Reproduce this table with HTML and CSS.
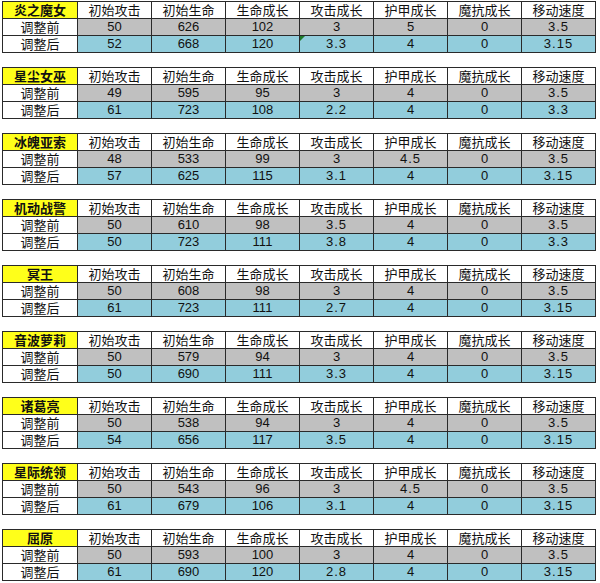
FILE: index.html
```html
<!DOCTYPE html>
<html lang="zh">
<head>
<meta charset="utf-8">
<title>英雄属性调整</title>
<link rel="stylesheet" href="styles.css">
</head>
<body>
<main class="sheet">
  <table class="hero">
    <colgroup><col class="c-label"><col><col><col><col><col><col><col></colgroup>
    <tr class="head"><th class="name">炎之魔女</th><th>初始攻击</th><th>初始生命</th><th>生命成长</th><th>攻击成长</th><th>护甲成长</th><th>魔抗成长</th><th>移动速度</th></tr>
    <tr class="before"><th>调整前</th><td>50</td><td>626</td><td>102</td><td>3</td><td>5</td><td>0</td><td class="dec">3.5</td></tr>
    <tr class="after"><th>调整后</th><td>52</td><td>668</td><td>120</td><td class="dec flag">3.3</td><td>4</td><td>0</td><td class="dec">3.15</td></tr>
  </table>
  <table class="hero">
    <colgroup><col class="c-label"><col><col><col><col><col><col><col></colgroup>
    <tr class="head"><th class="name">星尘女巫</th><th>初始攻击</th><th>初始生命</th><th>生命成长</th><th>攻击成长</th><th>护甲成长</th><th>魔抗成长</th><th>移动速度</th></tr>
    <tr class="before"><th>调整前</th><td>49</td><td>595</td><td>95</td><td>3</td><td>4</td><td>0</td><td class="dec">3.5</td></tr>
    <tr class="after"><th>调整后</th><td>61</td><td>723</td><td>108</td><td class="dec">2.2</td><td>4</td><td>0</td><td class="dec">3.3</td></tr>
  </table>
  <table class="hero">
    <colgroup><col class="c-label"><col><col><col><col><col><col><col></colgroup>
    <tr class="head"><th class="name">冰魄亚索</th><th>初始攻击</th><th>初始生命</th><th>生命成长</th><th>攻击成长</th><th>护甲成长</th><th>魔抗成长</th><th>移动速度</th></tr>
    <tr class="before"><th>调整前</th><td>48</td><td>533</td><td>99</td><td>3</td><td class="dec">4.5</td><td>0</td><td class="dec">3.5</td></tr>
    <tr class="after"><th>调整后</th><td>57</td><td>625</td><td>115</td><td class="dec">3.1</td><td>4</td><td>0</td><td class="dec">3.15</td></tr>
  </table>
  <table class="hero">
    <colgroup><col class="c-label"><col><col><col><col><col><col><col></colgroup>
    <tr class="head"><th class="name">机动战警</th><th>初始攻击</th><th>初始生命</th><th>生命成长</th><th>攻击成长</th><th>护甲成长</th><th>魔抗成长</th><th>移动速度</th></tr>
    <tr class="before"><th>调整前</th><td>50</td><td>610</td><td>98</td><td class="dec">3.5</td><td>4</td><td>0</td><td class="dec">3.5</td></tr>
    <tr class="after"><th>调整后</th><td>50</td><td>723</td><td>111</td><td class="dec">3.8</td><td>4</td><td>0</td><td class="dec">3.3</td></tr>
  </table>
  <table class="hero">
    <colgroup><col class="c-label"><col><col><col><col><col><col><col></colgroup>
    <tr class="head"><th class="name">冥王</th><th>初始攻击</th><th>初始生命</th><th>生命成长</th><th>攻击成长</th><th>护甲成长</th><th>魔抗成长</th><th>移动速度</th></tr>
    <tr class="before"><th>调整前</th><td>50</td><td>608</td><td>98</td><td>3</td><td>4</td><td>0</td><td class="dec">3.5</td></tr>
    <tr class="after"><th>调整后</th><td>61</td><td>723</td><td>111</td><td class="dec">2.7</td><td>4</td><td>0</td><td class="dec">3.15</td></tr>
  </table>
  <table class="hero">
    <colgroup><col class="c-label"><col><col><col><col><col><col><col></colgroup>
    <tr class="head"><th class="name">音波萝莉</th><th>初始攻击</th><th>初始生命</th><th>生命成长</th><th>攻击成长</th><th>护甲成长</th><th>魔抗成长</th><th>移动速度</th></tr>
    <tr class="before"><th>调整前</th><td>50</td><td>579</td><td>94</td><td>3</td><td>4</td><td>0</td><td class="dec">3.5</td></tr>
    <tr class="after"><th>调整后</th><td>50</td><td>690</td><td>111</td><td class="dec">3.3</td><td>4</td><td>0</td><td class="dec">3.15</td></tr>
  </table>
  <table class="hero">
    <colgroup><col class="c-label"><col><col><col><col><col><col><col></colgroup>
    <tr class="head"><th class="name">诸葛亮</th><th>初始攻击</th><th>初始生命</th><th>生命成长</th><th>攻击成长</th><th>护甲成长</th><th>魔抗成长</th><th>移动速度</th></tr>
    <tr class="before"><th>调整前</th><td>50</td><td>538</td><td>94</td><td>3</td><td>4</td><td>0</td><td class="dec">3.5</td></tr>
    <tr class="after"><th>调整后</th><td>54</td><td>656</td><td>117</td><td class="dec">3.5</td><td>4</td><td>0</td><td class="dec">3.15</td></tr>
  </table>
  <table class="hero">
    <colgroup><col class="c-label"><col><col><col><col><col><col><col></colgroup>
    <tr class="head"><th class="name">星际统领</th><th>初始攻击</th><th>初始生命</th><th>生命成长</th><th>攻击成长</th><th>护甲成长</th><th>魔抗成长</th><th>移动速度</th></tr>
    <tr class="before"><th>调整前</th><td>50</td><td>543</td><td>96</td><td>3</td><td class="dec">4.5</td><td>0</td><td class="dec">3.5</td></tr>
    <tr class="after"><th>调整后</th><td>61</td><td>679</td><td>106</td><td class="dec">3.1</td><td>4</td><td>0</td><td class="dec">3.15</td></tr>
  </table>
  <table class="hero">
    <colgroup><col class="c-label"><col><col><col><col><col><col><col></colgroup>
    <tr class="head"><th class="name">屈原</th><th>初始攻击</th><th>初始生命</th><th>生命成长</th><th>攻击成长</th><th>护甲成长</th><th>魔抗成长</th><th>移动速度</th></tr>
    <tr class="before"><th>调整前</th><td>50</td><td>593</td><td>100</td><td>3</td><td>4</td><td>0</td><td class="dec">3.5</td></tr>
    <tr class="after"><th>调整后</th><td>61</td><td>690</td><td>120</td><td class="dec">2.8</td><td>4</td><td>0</td><td class="dec">3.15</td></tr>
  </table>
</main>
</body>
</html>
```

FILE: styles.css
```css
html, body {
  margin: 0;
  padding: 0;
  background: #ffffff;
}

.sheet {
  display: flex;
  flex-direction: column;
  gap: 14px;
  padding: 1px 0 0 2px;
}

.hero {
  border-collapse: collapse;
  table-layout: fixed;
  width: 594px;
  font-family: "Noto Sans CJK SC", "Liberation Sans", sans-serif;
  font-size: 13px;
  color: #111;
}

.hero col.c-label {
  width: 75px;
}

.hero th,
.hero td {
  border: 1px solid #2a2a2a;
  height: 16px;
  padding: 0;
  line-height: 16px;
  text-align: center;
  font-weight: normal;
  white-space: nowrap;
  overflow: hidden;
}

.hero td {
  font-family: "Liberation Sans", "Noto Sans CJK SC", sans-serif;
}

.hero .head th {
  background: #ffffff;
}

.hero .head th.name {
  background: #ffff1a;
  font-weight: bold;
}

.hero .before td {
  background: #c0c0c0;
}

.hero .after td {
  background: #92cddc;
}

.hero td.dec {
  letter-spacing: 1px;
}

.hero td.flag {
  position: relative;
}

.hero td.flag::before {
  content: "";
  position: absolute;
  left: 0;
  top: 0;
  border-top: 5px solid #1f7a2a;
  border-right: 5px solid transparent;
}
```
